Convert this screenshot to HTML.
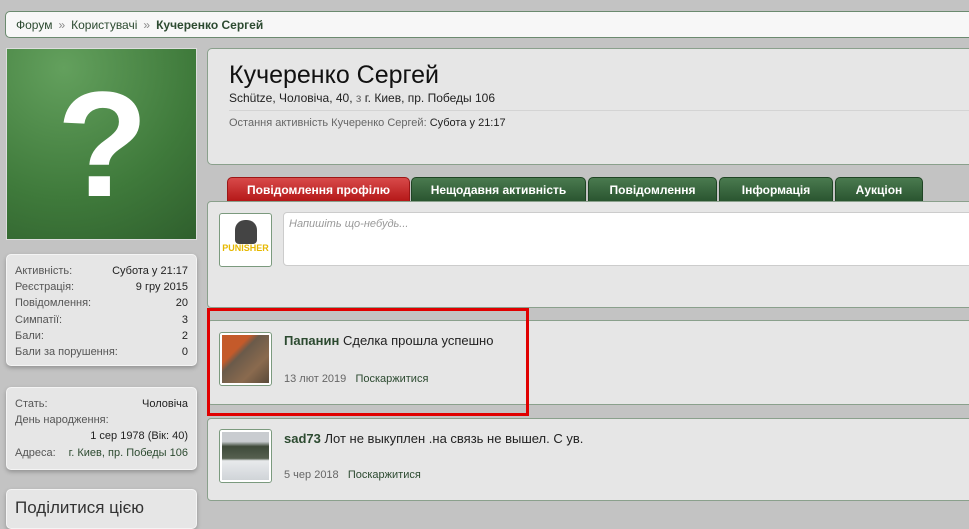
<!DOCTYPE html>
<html><head><meta charset="utf-8"><style>
*{box-sizing:border-box;margin:0;padding:0}
body{width:969px;height:511px;overflow:hidden;background:#c3c3c3;font-family:"Liberation Sans","DejaVu Sans",sans-serif;font-size:11px;color:#222;position:relative}
.abs{position:absolute}
.crumb{left:5px;top:11px;width:980px;height:27px;background:#f7f7f7;border:1px solid #6b8a6f;border-radius:5px;padding:6px 10px;font-size:12px;color:#2c4a30}
.crumb .sep{color:#888;margin:0 6px}
.box{background:#e6e6e6;border:1px solid #f4f4f4;border-radius:5px;box-shadow:0 2px 4px rgba(0,0,0,.25)}
.av{left:6px;top:48px;width:191px;height:192px;background:radial-gradient(circle at 30% 10%,#63a05d,#3f7a3b 60%,#2f5f2d);border:1px solid #ddd}
.q{left:0;top:20px;width:191px;text-align:center;color:#fff;font-size:150px;font-weight:bold;font-family:"Liberation Sans",sans-serif;line-height:1}
.stat{left:6px;width:191px;padding:8px 8px;line-height:16.2px;color:#555}
.row{display:flex;justify-content:space-between}
.row b{font-weight:normal;color:#222}
.main{left:207px;top:48px;width:780px;height:117px;background:#e6e6e6;border:1px solid #8aa08c;border-radius:5px}
.tab{top:177px;height:25px;border-radius:5px 5px 0 0;color:#fff;font-weight:bold;font-size:12px;text-align:center;line-height:24px;background:linear-gradient(#4a7a4f,#2a5530);border:1px solid #1f4424;font-family:"Liberation Sans Narrow","Liberation Sans",sans-serif}
.tab.r{background:linear-gradient(#d84a4a,#b51818);border-color:#9c1616}
.panel{left:207px;width:780px;background:#e6e6e6;border:1px solid #8aa08c;border-radius:4px}
.thumb{width:53px;height:54px;border:1px solid #7b9a7e;border-radius:3px;background:#fff;padding:2px}
.gr{color:#2c4a30}
</style></head><body>
<div class="abs crumb"><span>Форум</span><span class="sep">»</span><span>Користувачі</span><span class="sep">»</span><b>Кучеренко Сергей</b></div>
<div class="abs av"><div class="abs q">?</div></div>
<div class="abs box stat" style="top:254px;height:112px">
<div class="row"><span>Активність:</span><b>Субота у 21:17</b></div>
<div class="row"><span>Реєстрація:</span><b>9 гру 2015</b></div>
<div class="row"><span>Повідомлення:</span><b>20</b></div>
<div class="row"><span>Симпатії:</span><b>3</b></div>
<div class="row"><span>Бали:</span><b>2</b></div>
<div class="row"><span>Бали за порушення:</span><b>0</b></div>
</div>
<div class="abs box stat" style="top:387px;height:83px">
<div class="row"><span>Стать:</span><b>Чоловіча</b></div>
<div class="row"><span>День народження:</span></div>
<div class="row"><span></span><b>1 сер 1978 (Вік: 40)</b></div>
<div class="row"><span>Адреса:</span><b class="gr" style="color:#2c4a30">г. Киев, пр. Победы 106</b></div>
</div>
<div class="abs box" style="left:6px;top:489px;width:191px;height:40px;padding:8px;font-size:17px;color:#333">Поділитися цією</div>
<div class="abs main">
<div class="abs" style="left:21px;top:12px;font-size:25px;color:#111">Кучеренко Сергей</div>
<div class="abs" style="left:21px;top:42px;font-size:12px;color:#222">Schütze, Чоловіча, 40, <span style="color:#666">з</span> г. Киев, пр. Победы 106</div>
<div class="abs" style="left:21px;top:61px;width:760px;border-top:1px solid #d4d4d4"></div>
<div class="abs" style="left:21px;top:68px;color:#666">Остання активність Кучеренко Сергей: <span style="color:#222">Субота у 21:17</span></div>
</div>
<div class="abs tab r" style="left:227px;width:183px">Повідомлення профілю</div>
<div class="abs tab" style="left:411px;width:175px">Нещодавня активність</div>
<div class="abs tab" style="left:588px;width:129px">Повідомлення</div>
<div class="abs tab" style="left:719px;width:114px">Інформація</div>
<div class="abs tab" style="left:835px;width:88px">Аукціон</div>
<div class="abs panel" style="top:201px;height:107px">
<div class="abs thumb" style="left:11px;top:11px;background:#fff"><div style="width:22px;height:24px;margin:4px auto 0;background:#444;border-radius:10px 10px 4px 4px"></div><div style="font-size:9px;color:#e6b800;font-weight:bold;text-align:center;line-height:9px">PUNISHER</div></div>
<div class="abs" style="left:75px;top:10px;width:700px;height:54px;background:#fff;border:1px solid #ccc;border-radius:4px;padding:5px;font-style:italic;color:#999">Напишіть що-небудь...</div>
</div>
<div class="abs panel" style="top:320px;height:85px">
<div class="abs thumb" style="left:11px;top:11px"><div style="width:100%;height:100%;background:linear-gradient(135deg,#c45a2a 0 30%,#6a5a4a 40%,#8a6a4e 70%,#5a4a3a)"></div></div>
<div class="abs" style="left:76px;top:12px;font-size:13px"><b class="gr">Папанин</b> Сделка прошла успешно</div>
<div class="abs" style="left:76px;top:52px;color:#666">13 лют 2019 &nbsp; <span class="gr">Поскаржитися</span></div>
</div>
<div class="abs" style="left:207px;top:308px;width:322px;height:108px;border:3px solid #e00000"></div>
<div class="abs panel" style="top:418px;height:83px">
<div class="abs thumb" style="left:11px;top:10px"><div style="width:100%;height:100%;background:linear-gradient(#c9ccd0 0 20%,#3f4a3a 30%,#556050 55%,#e8eaec 60%,#d0d4d8)"></div></div>
<div class="abs" style="left:76px;top:12px;font-size:13px"><b class="gr">sad73</b> Лот не выкуплен .на связь не вышел. С ув.</div>
<div class="abs" style="left:76px;top:50px;color:#666">5 чер 2018 &nbsp; <span class="gr">Поскаржитися</span></div>
</div>
</body></html>
